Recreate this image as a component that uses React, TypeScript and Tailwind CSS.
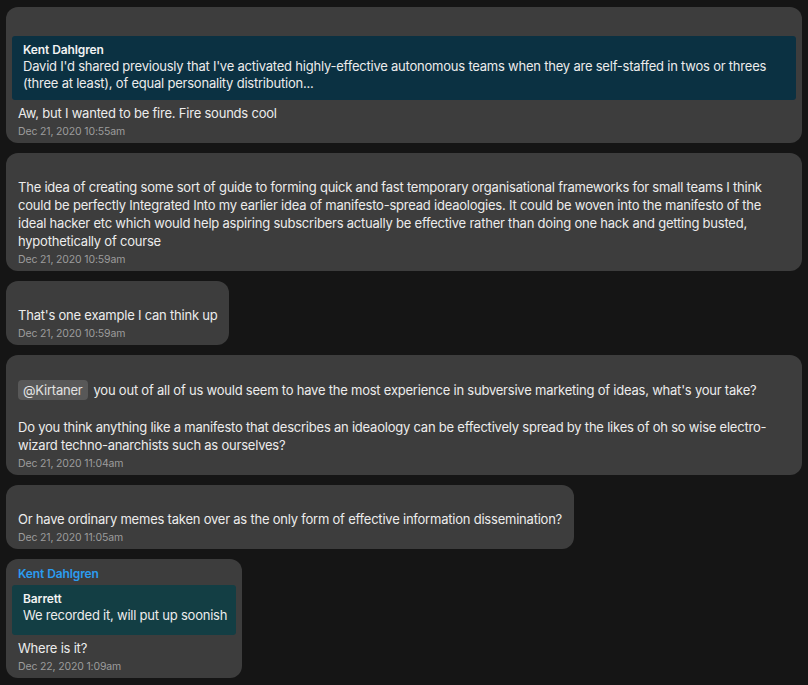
import React from "react"

type Quote = { author: string; text: string; tone: "blue" | "teal" }

type Message = {
  id: number
  author?: string
  quote?: Quote
  body: React.ReactNode
  time: string
}

const messages: Message[] = [
  {
    id: 1,
    quote: {
      author: "Kent Dahlgren",
      text: "David I'd shared previously that I've activated highly-effective autonomous teams when they are self-staffed in twos or threes (three at least), of equal personality distribution...",
      tone: "blue",
    },
    body: <p>Aw, but I wanted to be fire. Fire sounds cool</p>,
    time: "Dec 21, 2020 10:55am",
  },
  {
    id: 2,
    body: (
      <p>
        The idea of creating some sort of guide to forming quick and fast temporary organisational frameworks for small
        teams I think could be perfectly Integrated Into my earlier idea of manifesto-spread ideaologies. It could be
        woven into the manifesto of the ideal hacker etc which would help aspiring subscribers actually be effective
        rather than doing one hack and getting busted, hypothetically of course
      </p>
    ),
    time: "Dec 21, 2020 10:59am",
  },
  {
    id: 3,
    body: <p>That's one example I can think up</p>,
    time: "Dec 21, 2020 10:59am",
  },
  {
    id: 4,
    body: (
      <>
        <p className="leading-[20px]">
          <span className="rounded-[4px] bg-[#585858] px-[5px] py-[2px] text-[#e2e2e2]">@Kirtaner</span>
          <span className="ml-[6px]">
            you out of all of us would seem to have the most experience in subversive marketing of ideas, what's your
            take?
          </span>
        </p>
        <p className="h-[18px]" />
        <p>
          Do you think anything like a manifesto that describes an ideaology can be effectively spread by the likes of
          oh so wise electro-wizard techno-anarchists such as ourselves?
        </p>
      </>
    ),
    time: "Dec 21, 2020 11:04am",
  },
  {
    id: 5,
    body: <p>Or have ordinary memes taken over as the only form of effective information dissemination?</p>,
    time: "Dec 21, 2020 11:05am",
  },
  {
    id: 6,
    author: "Kent Dahlgren",
    quote: { author: "Barrett", text: "We recorded it, will put up soonish", tone: "teal" },
    body: <p>Where is it?</p>,
    time: "Dec 22, 2020 1:09am",
  },
]

function QuoteBox({ quote }: { quote: Quote }) {
  const teal = quote.tone === "teal"
  return (
    <div
      className={
        teal
          ? "mt-[2px] rounded-[3px] bg-[#133e44] pl-[11px] pr-[9px] pt-[6px] pb-[11px]"
          : "mt-[5px] rounded-[3px] bg-[#0b3142] pl-[11px] pr-[9px] pt-[6px] pb-[8px]"
      }
    >
      <div className="text-[12px] font-semibold leading-[16px] tracking-[-0.1px] text-[#f2f2f2]">{quote.author}</div>
      <div className="text-[13px] leading-[17px] text-[#ececec]">{quote.text}</div>
    </div>
  )
}

function Bubble({ m }: { m: Message }) {
  return (
    <div className="w-fit max-w-full rounded-[12px] bg-[#3d3d3d] px-[6px] pt-[6px] pb-[3px]">
      <div className="h-[18px] px-[6px] text-[12px] font-semibold leading-[18px] tracking-[-0.1px] text-[#2b9cf0]">
        {m.author}
      </div>
      {m.quote && <QuoteBox quote={m.quote} />}
      <div className={m.quote ? "mt-[4px] px-[6px] leading-[18px]" : "mt-[1px] px-[6px] leading-[18px]"}>{m.body}</div>
      <div className="mt-[2px] px-[6px] text-[10.5px] leading-[16px] tracking-[-0.15px] text-[#9c9c9c]">{m.time}</div>
    </div>
  )
}

export default function App() {
  return (
    <div
      className="min-h-[685px] bg-[#151515] px-[6px] pt-[7px] pb-[6px] text-[13px] tracking-[-0.22px] text-[#ececec]"
      style={{ fontFamily: "Inter, 'Liberation Sans', sans-serif" }}
    >
      <div className="flex flex-col gap-[10px]">
        {messages.map((m) => (
          <Bubble key={m.id} m={m} />
        ))}
      </div>
    </div>
  )
}
